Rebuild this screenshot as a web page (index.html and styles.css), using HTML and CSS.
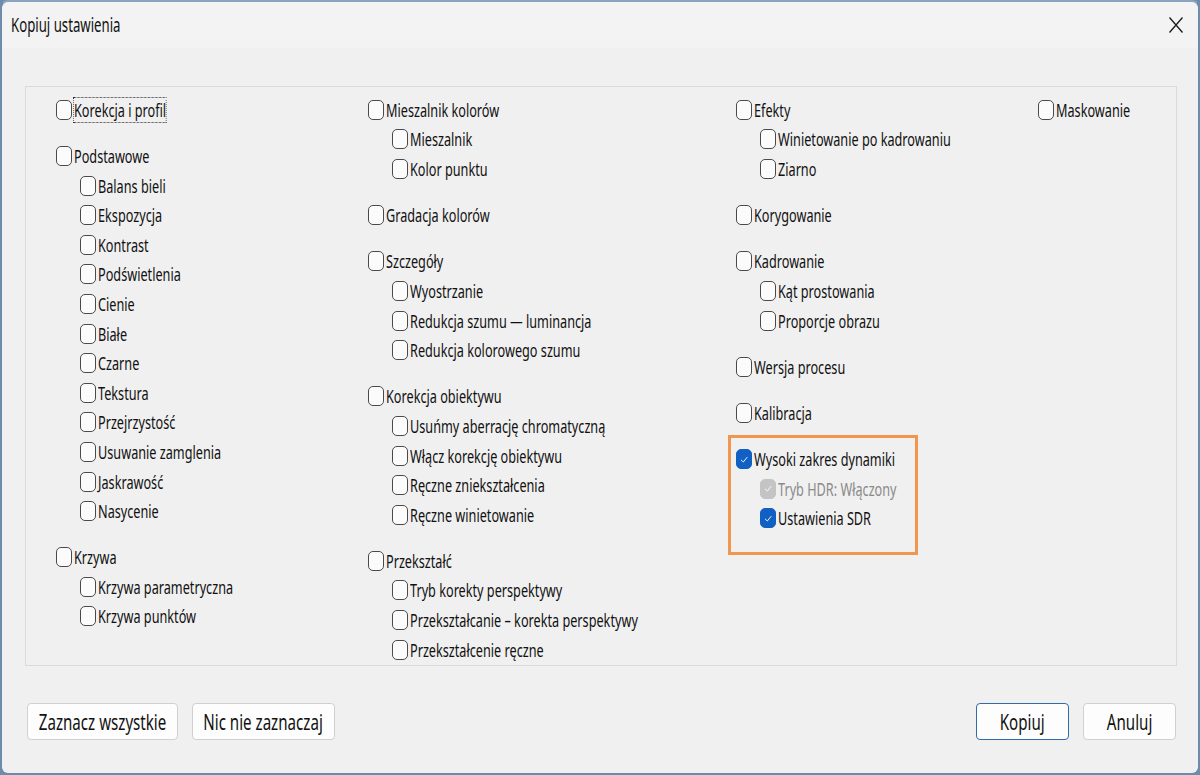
FILE: index.html
```html
<!DOCTYPE html>
<html lang="pl">
<head>
    <meta charset="UTF-8">
    <title>Kopiuj ustawienia</title>
    <link rel="stylesheet" href="styles.css">
</head>
<body>

    <div class="dialog">
        <!-- Pasek tytułu -->
        <div class="titlebar">
            <span class="title">Kopiuj ustawienia</span>
            <span class="close">
                <svg width="16" height="18" viewBox="0 0 16 18"><path d="M1.5 1.5 L14.5 16.5 M14.5 1.5 L1.5 16.5" stroke="#1a1a1a" stroke-width="1.3" fill="none"/></svg>
            </span>
        </div>

        <!-- Panel z opcjami -->
        <div class="panel">
            <div class="col col-1">
                <div class="group">
                    <label class="item"><span class="box"></span><span class="txt focus">Korekcja i profil</span></label>
                </div>
                <div class="group">
                    <label class="item"><span class="box"></span><span class="txt">Podstawowe</span></label>
                    <label class="item sub"><span class="box"></span><span class="txt">Balans bieli</span></label>
                    <label class="item sub"><span class="box"></span><span class="txt">Ekspozycja</span></label>
                    <label class="item sub"><span class="box"></span><span class="txt">Kontrast</span></label>
                    <label class="item sub"><span class="box"></span><span class="txt">Podświetlenia</span></label>
                    <label class="item sub"><span class="box"></span><span class="txt">Cienie</span></label>
                    <label class="item sub"><span class="box"></span><span class="txt">Białe</span></label>
                    <label class="item sub"><span class="box"></span><span class="txt">Czarne</span></label>
                    <label class="item sub"><span class="box"></span><span class="txt">Tekstura</span></label>
                    <label class="item sub"><span class="box"></span><span class="txt">Przejrzystość</span></label>
                    <label class="item sub"><span class="box"></span><span class="txt">Usuwanie zamglenia</span></label>
                    <label class="item sub"><span class="box"></span><span class="txt">Jaskrawość</span></label>
                    <label class="item sub"><span class="box"></span><span class="txt">Nasycenie</span></label>
                </div>
                <div class="group">
                    <label class="item"><span class="box"></span><span class="txt">Krzywa</span></label>
                    <label class="item sub"><span class="box"></span><span class="txt">Krzywa parametryczna</span></label>
                    <label class="item sub"><span class="box"></span><span class="txt">Krzywa punktów</span></label>
                </div>
            </div>

            <div class="col col-2">
                <div class="group">
                    <label class="item"><span class="box"></span><span class="txt">Mieszalnik kolorów</span></label>
                    <label class="item sub"><span class="box"></span><span class="txt">Mieszalnik</span></label>
                    <label class="item sub"><span class="box"></span><span class="txt">Kolor punktu</span></label>
                </div>
                <div class="group">
                    <label class="item"><span class="box"></span><span class="txt">Gradacja kolorów</span></label>
                </div>
                <div class="group">
                    <label class="item"><span class="box"></span><span class="txt">Szczegóły</span></label>
                    <label class="item sub"><span class="box"></span><span class="txt">Wyostrzanie</span></label>
                    <label class="item sub"><span class="box"></span><span class="txt">Redukcja szumu — luminancja</span></label>
                    <label class="item sub"><span class="box"></span><span class="txt">Redukcja kolorowego szumu</span></label>
                </div>
                <div class="group">
                    <label class="item"><span class="box"></span><span class="txt">Korekcja obiektywu</span></label>
                    <label class="item sub"><span class="box"></span><span class="txt">Usuńmy aberrację chromatyczną</span></label>
                    <label class="item sub"><span class="box"></span><span class="txt">Włącz korekcję obiektywu</span></label>
                    <label class="item sub"><span class="box"></span><span class="txt">Ręczne zniekształcenia</span></label>
                    <label class="item sub"><span class="box"></span><span class="txt">Ręczne winietowanie</span></label>
                </div>
                <div class="group">
                    <label class="item"><span class="box"></span><span class="txt">Przekształć</span></label>
                    <label class="item sub"><span class="box"></span><span class="txt">Tryb korekty perspektywy</span></label>
                    <label class="item sub"><span class="box"></span><span class="txt">Przekształcanie – korekta perspektywy</span></label>
                    <label class="item sub"><span class="box"></span><span class="txt">Przekształcenie ręczne</span></label>
                </div>
            </div>

            <div class="col col-3">
                <div class="group">
                    <label class="item"><span class="box"></span><span class="txt">Efekty</span></label>
                    <label class="item sub"><span class="box"></span><span class="txt">Winietowanie po kadrowaniu</span></label>
                    <label class="item sub"><span class="box"></span><span class="txt">Ziarno</span></label>
                </div>
                <div class="group">
                    <label class="item"><span class="box"></span><span class="txt">Korygowanie</span></label>
                </div>
                <div class="group">
                    <label class="item"><span class="box"></span><span class="txt">Kadrowanie</span></label>
                    <label class="item sub"><span class="box"></span><span class="txt">Kąt prostowania</span></label>
                    <label class="item sub"><span class="box"></span><span class="txt">Proporcje obrazu</span></label>
                </div>
                <div class="group">
                    <label class="item"><span class="box"></span><span class="txt">Wersja procesu</span></label>
                </div>
                <div class="group">
                    <label class="item"><span class="box"></span><span class="txt">Kalibracja</span></label>
                </div>
                <div class="group highlight">
                    <label class="item"><span class="box checked"><svg viewBox="0 0 10 10"><path d="M2 5.3 L4.3 7.5 L8.3 2.6" /></svg></span><span class="txt">Wysoki zakres dynamiki</span></label>
                    <label class="item sub disabled"><span class="box checked"><svg viewBox="0 0 10 10"><path d="M2 5.3 L4.3 7.5 L8.3 2.6" /></svg></span><span class="txt">Tryb HDR: Włączony</span></label>
                    <label class="item sub"><span class="box checked"><svg viewBox="0 0 10 10"><path d="M2 5.3 L4.3 7.5 L8.3 2.6" /></svg></span><span class="txt">Ustawienia SDR</span></label>
                </div>
            </div>

            <div class="col col-4">
                <div class="group">
                    <label class="item"><span class="box"></span><span class="txt">Maskowanie</span></label>
                </div>
            </div>
        </div>

        <!-- Przyciski -->
        <div class="buttons">
            <div class="btn-group">
                <button class="btn wide"><span class="lbl">Zaznacz wszystkie</span></button>
                <button class="btn wide2"><span class="lbl">Nic nie zaznaczaj</span></button>
            </div>
            <div class="btn-group">
                <button class="btn default"><span class="lbl">Kopiuj</span></button>
                <button class="btn"><span class="lbl">Anuluj</span></button>
            </div>
        </div>
    </div>

</body>
</html>
```

FILE: styles.css
```css
html, body {
    margin: 0;
    padding: 0;
    background-color: #6d8cab;
}

body {
    font-family: "Noto Sans", "Open Sans", sans-serif;
    font-size: 18.5px;
    color: #111;
}

/* Okno dialogowe */
.dialog {
    width: 1200px;
    height: 775px;
    box-sizing: border-box;
    background-color: #f0f0f0;
    border: 2px solid #6d8cab;
    border-top-color: #8aa5c0;
    border-radius: 8px;
    display: flex;
    flex-direction: column;
}

.titlebar {
    height: 46px;
    display: flex;
    align-items: center;
    justify-content: space-between;
    padding: 0 14px 0 9px;
    background-color: #f3f3f3;
    border-radius: 8px 8px 0 0;
}

.title {
    font-size: 20px;
    display: inline-block;
    transform: scaleX(0.66);
    transform-origin: left center;
    white-space: nowrap;
    margin-top: -2px;
}

.close svg {
    display: block;
}

/* Panel */
.panel {
    margin: 38px 21px 0 23px;
    height: 580px;
    box-sizing: border-box;
    border: 1px solid #dadada;
    padding: 8px 0 0 30px;
    display: grid;
    grid-template-columns: 312px 368px 302px 1fr;
}

.group {
    margin-bottom: 16.6px;
}

.item {
    display: flex;
    align-items: center;
    height: 29.6px;
    white-space: nowrap;
}

.item.sub {
    padding-left: 24px;
}

.box {
    width: 14px;
    height: 18px;
    border: 1px solid #4a4a4a;
    border-radius: 5px;
    background-color: #fbfbfb;
    margin-right: 2px;
    flex-shrink: 0;
    display: flex;
    align-items: center;
    justify-content: center;
}

.box.checked {
    background-color: #1160c4;
    border-color: #1160c4;
}

.box svg {
    width: 10px;
    height: 11px;
}

.box svg path {
    fill: none;
    stroke: #fff;
    stroke-width: 0.9;
}

.txt {
    display: inline-block;
    transform: scaleX(0.685);
    transform-origin: left center;
    line-height: 24px;
}

.disabled .box.checked {
    background-color: #c4c4c4;
    border-color: #c4c4c4;
}

.disabled .txt {
    color: #8a8a8a;
}

.txt.focus {
    outline: 1px dotted #333;
    outline-offset: 0;
}

/* Ramka wyróżnienia */
.highlight {
    width: 190px;
    box-sizing: border-box;
    margin: -9px 0 0 -8px;
    border: 3px solid #f0964e;
    padding: 6px 0 19px 5px;
}

/* Przyciski */
.buttons {
    display: flex;
    justify-content: space-between;
    padding: 37px 22px 0 25px;
}

.btn-group {
    display: flex;
    gap: 14px;
}

.btn {
    font-family: inherit;
    font-size: 21px;
    color: #111;
    height: 37px;
    width: 93px;
    background-color: #fdfdfd;
    border: 1px solid #d0d0d0;
    border-radius: 4px;
    padding: 0;
    white-space: nowrap;
    display: flex;
    align-items: center;
    justify-content: center;
}

.btn .lbl {
    display: inline-block;
    transform: scaleX(0.72);
    flex-shrink: 0;
}

.btn.wide {
    width: 151px;
}

.btn.wide2 {
    width: 143px;
}

.btn.default {
    border-color: #2f6ca8;
}
```
